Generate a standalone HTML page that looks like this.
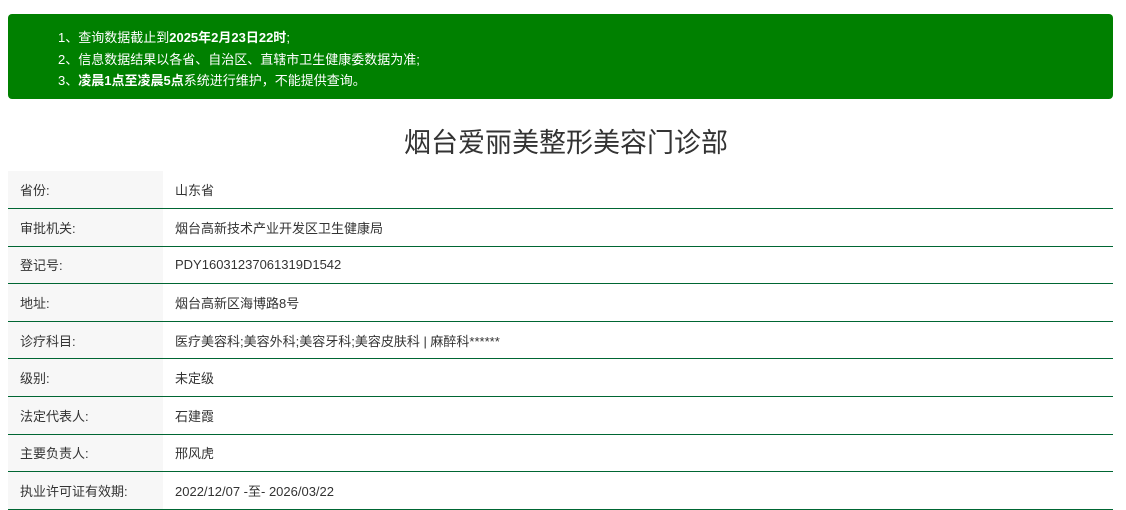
<!DOCTYPE html>
<html><head><meta charset="utf-8"><style>
*{margin:0;padding:0;box-sizing:border-box}
body{width:1126px;height:505px;overflow:hidden;background:#fff;font-family:"Liberation Sans","Noto Sans CJK SC",sans-serif;color:#333;position:relative}
.note{position:absolute;left:8px;top:14px;width:1105px;height:85px;background:#008000;border-radius:4px;color:#fff;font-size:13px;line-height:21.5px;padding:13px 0 0 50px}
.note b{font-weight:bold}
h1{position:absolute;left:0;width:1126px;top:125px;text-align:center;font-weight:normal;font-size:27px;color:#333;line-height:36px;padding-left:6px}
table{position:absolute;left:8px;top:171px;width:1105px;border-collapse:collapse;font-size:13px}
td{height:37.6px;border-bottom:1px solid #006633;vertical-align:middle}
td.l{width:155px;background:#f7f7f7;padding-left:12px}
td.v{padding-left:12px}
</style></head><body>
<div class="note">
<div>1、查询数据截止到<b>2025年2月23日22时</b>;</div>
<div>2、信息数据结果以各省、自治区、直辖市卫生健康委数据为准;</div>
<div>3、<b>凌晨1点至凌晨5点</b>系统进行维护，不能提供查询。</div>
</div>
<h1>烟台爱丽美整形美容门诊部</h1>
<table>
<tr><td class="l">省份:</td><td class="v">山东省</td></tr>
<tr><td class="l">审批机关:</td><td class="v">烟台高新技术产业开发区卫生健康局</td></tr>
<tr><td class="l">登记号:</td><td class="v">PDY16031237061319D1542</td></tr>
<tr><td class="l">地址:</td><td class="v">烟台高新区海博路8号</td></tr>
<tr><td class="l">诊疗科目:</td><td class="v">医疗美容科;美容外科;美容牙科;美容皮肤科 | 麻醉科******</td></tr>
<tr><td class="l">级别:</td><td class="v">未定级</td></tr>
<tr><td class="l">法定代表人:</td><td class="v">石建霞</td></tr>
<tr><td class="l">主要负责人:</td><td class="v">邢风虎</td></tr>
<tr><td class="l">执业许可证有效期:</td><td class="v">2022/12/07 -至- 2026/03/22</td></tr>
</table>
</body></html>
